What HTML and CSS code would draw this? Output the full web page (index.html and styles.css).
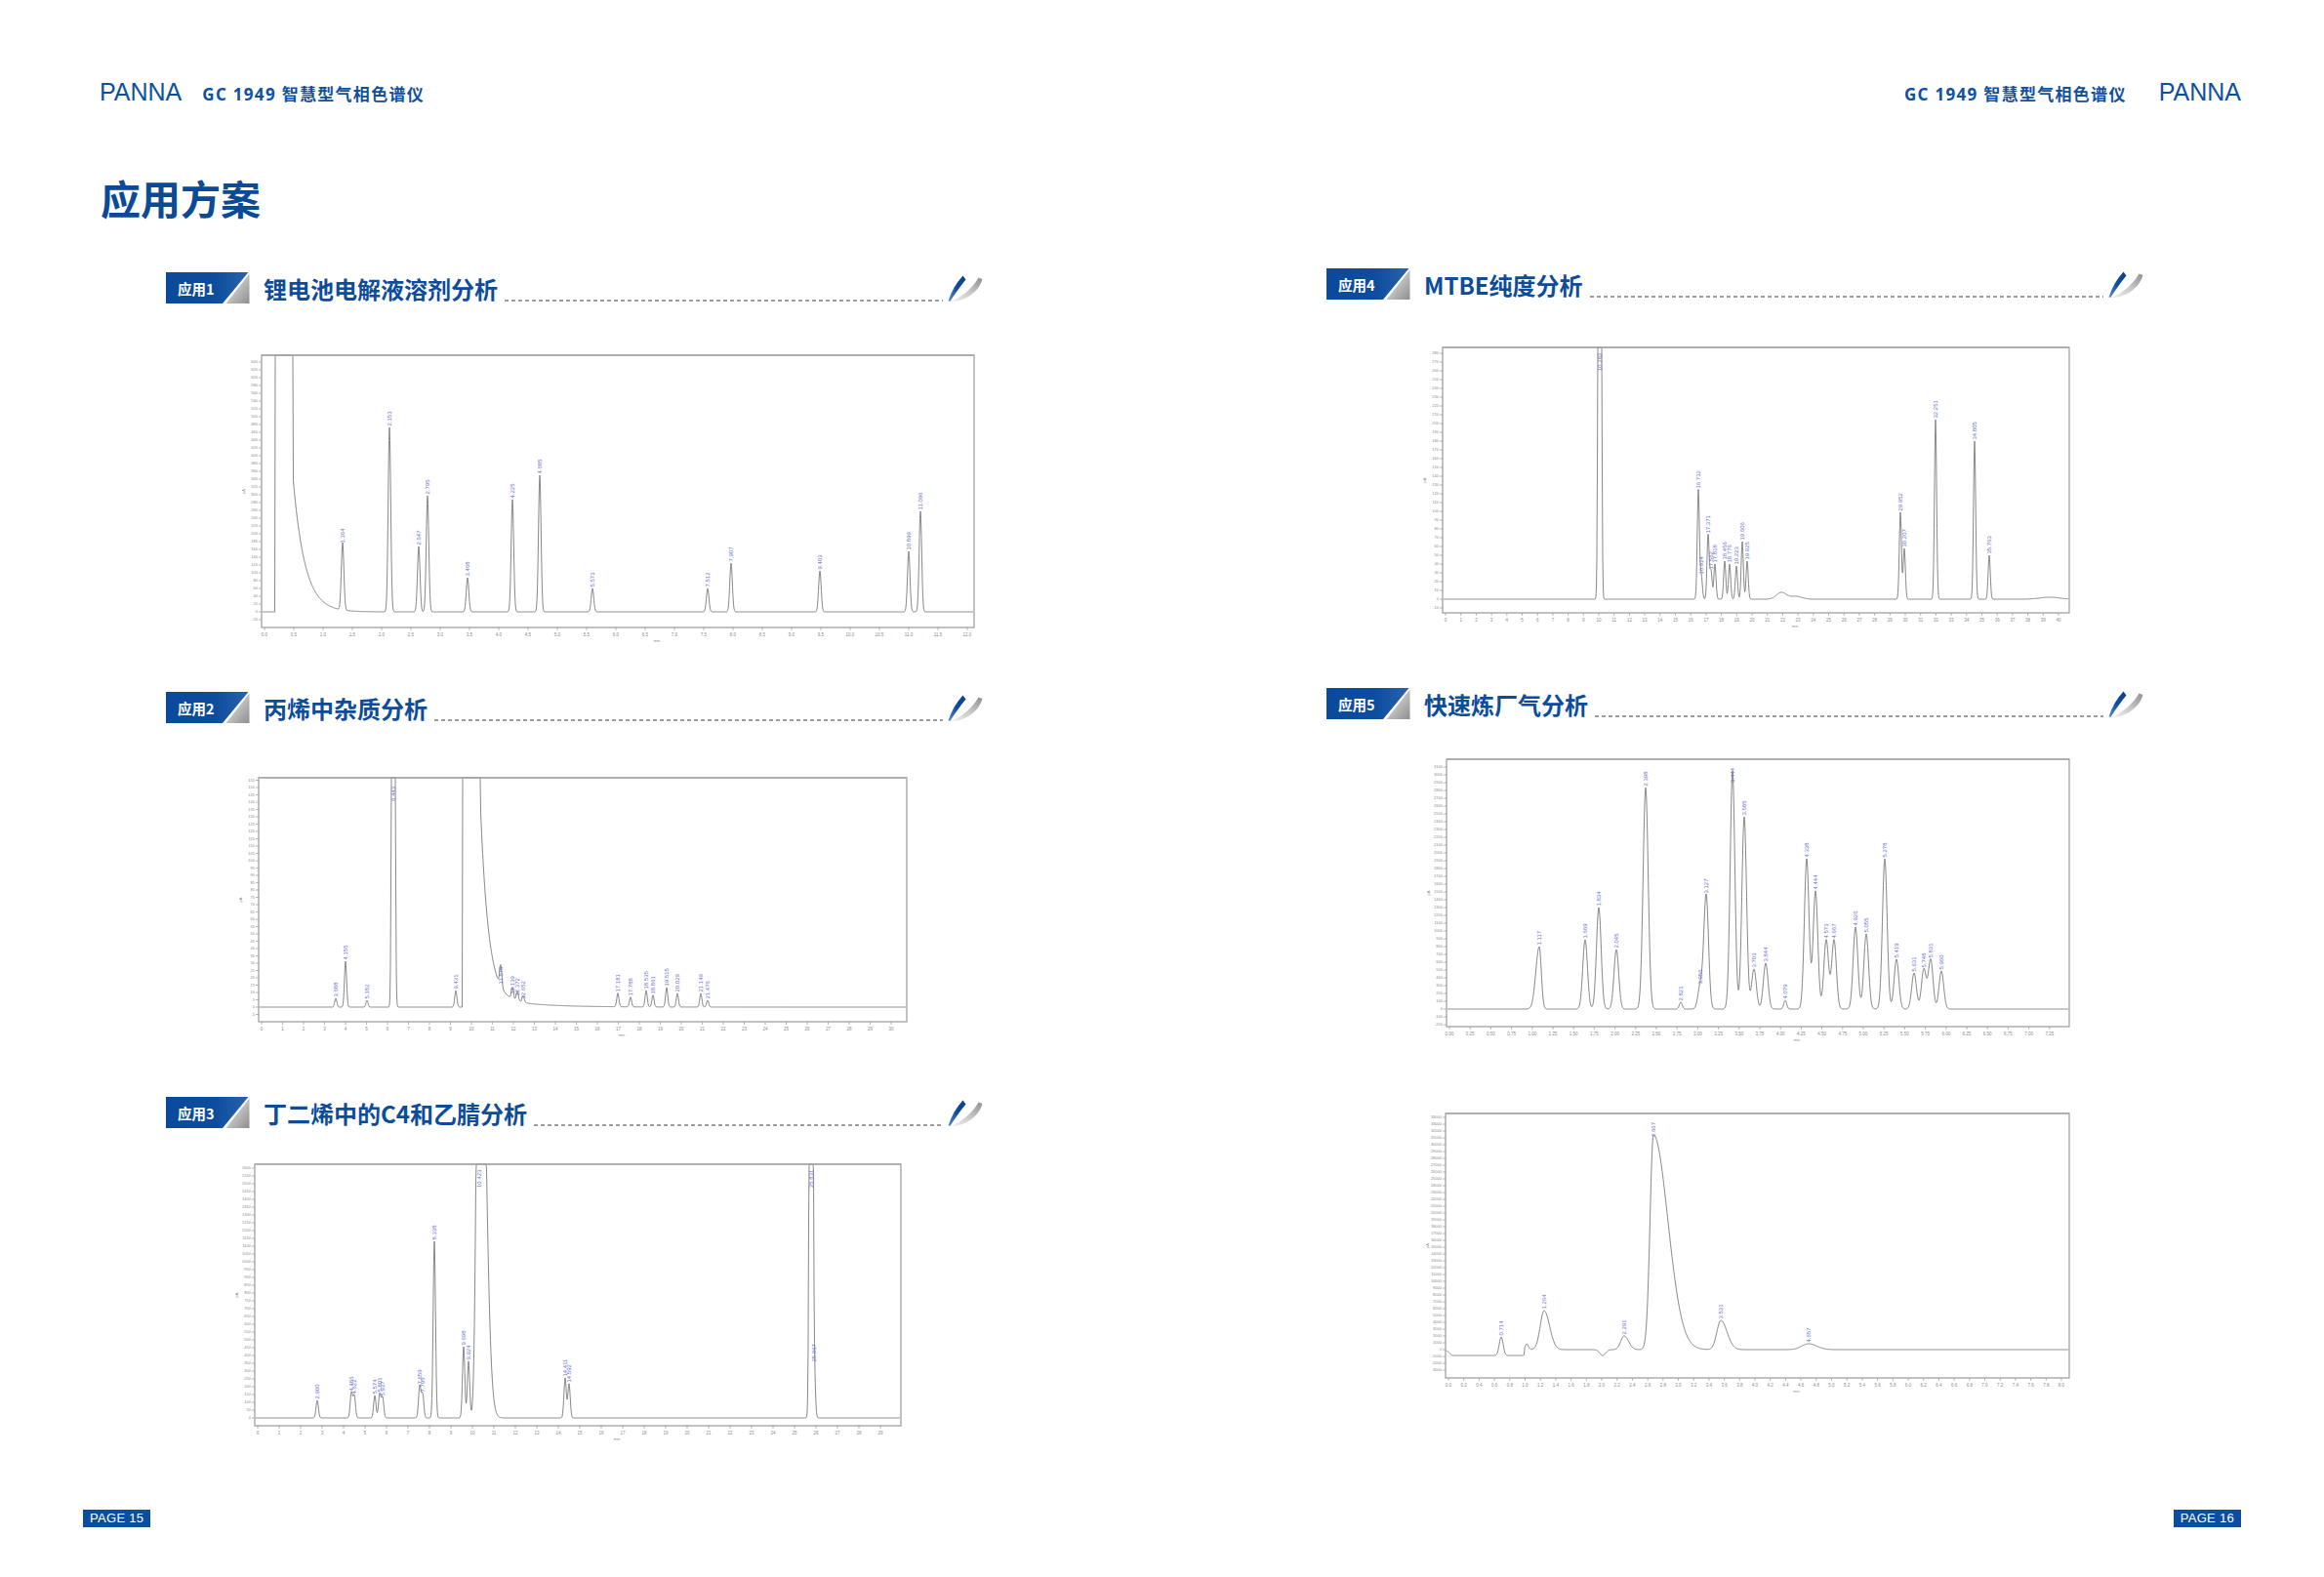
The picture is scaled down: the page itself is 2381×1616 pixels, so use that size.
FILE: index.html
```html
<!DOCTYPE html>
<html lang="zh-CN">
<head>
<meta charset="utf-8">
<title>应用方案</title>
<link rel="stylesheet" href="styles.css">
</head>
<body>
<svg class="defs" width="0" height="0" aria-hidden="true">
  <defs>
    <linearGradient id="badgeGray" x1="0" y1="0" x2="1" y2="1">
      <stop offset="0" stop-color="#f4f4f4"/>
      <stop offset="0.45" stop-color="#c4c4c4"/>
      <stop offset="1" stop-color="#8e8e8e"/>
    </linearGradient>
    <linearGradient id="badgeBlue" x1="0" y1="0" x2="1" y2="0">
      <stop offset="0" stop-color="#0b4a9a"/>
      <stop offset="0.6" stop-color="#0d4d9e"/>
      <stop offset="1" stop-color="#2a64ad"/>
    </linearGradient>
    <linearGradient id="swooshGray" x1="0" y1="1" x2="1" y2="0">
      <stop offset="0" stop-color="#f2f2f2"/>
      <stop offset="0.5" stop-color="#c8c8c8"/>
      <stop offset="1" stop-color="#8f8f8f"/>
    </linearGradient>
    <linearGradient id="swooshBlue" x1="0" y1="1" x2="1" y2="0">
      <stop offset="0" stop-color="#5f8fd0"/>
      <stop offset="0.5" stop-color="#0e4d9e"/>
      <stop offset="1" stop-color="#0a3f86"/>
    </linearGradient>
  </defs>
</svg>
<div class="spread">
  <section class="page page-left">
    <header class="running-head">
      <span class="brand">PANNA</span>
      <span class="model">GC 1949 智慧型气相色谱仪</span>
    </header>
    <h1 class="page-title">应用方案</h1>

    <div class="app-head head-1">
      <svg class="badge" viewBox="0 0 86 32"><path class="badge-blue" d="M0 0H84.5L58 32H0Z"/><path class="badge-gray" d="M85.5 1.5V32H61.5Z"/><text x="12" y="22.5" class="badge-text">应用1</text></svg>
      <h2 class="app-title">锂电池电解液溶剂分析</h2>
      <span class="rule"></span>
      <svg class="swoosh" viewBox="0 0 37 28"><path fill="url(#swooshBlue)" d="M1.5 27.5C4.5 18 9.5 9 16.5 1.5L19.5 5.5C13.5 13 8 20.5 3.5 27.8Z"/><path fill="url(#swooshGray)" d="M4 28C15 23.5 26 15 32.5 3.5L36.5 5C34 14.5 26 22.5 14 26.8C10 27.8 6.5 28.2 4 28Z"/></svg>
    </div>
    <div class="chart chart-1" data-chart="c1"></div>

    <div class="app-head head-2">
      <svg class="badge" viewBox="0 0 86 32"><path class="badge-blue" d="M0 0H84.5L58 32H0Z"/><path class="badge-gray" d="M85.5 1.5V32H61.5Z"/><text x="12" y="22.5" class="badge-text">应用2</text></svg>
      <h2 class="app-title">丙烯中杂质分析</h2>
      <span class="rule"></span>
      <svg class="swoosh" viewBox="0 0 37 28"><path fill="url(#swooshBlue)" d="M1.5 27.5C4.5 18 9.5 9 16.5 1.5L19.5 5.5C13.5 13 8 20.5 3.5 27.8Z"/><path fill="url(#swooshGray)" d="M4 28C15 23.5 26 15 32.5 3.5L36.5 5C34 14.5 26 22.5 14 26.8C10 27.8 6.5 28.2 4 28Z"/></svg>
    </div>
    <div class="chart chart-2" data-chart="c2"></div>

    <div class="app-head head-3">
      <svg class="badge" viewBox="0 0 86 32"><path class="badge-blue" d="M0 0H84.5L58 32H0Z"/><path class="badge-gray" d="M85.5 1.5V32H61.5Z"/><text x="12" y="22.5" class="badge-text">应用3</text></svg>
      <h2 class="app-title">丁二烯中的C4和乙腈分析</h2>
      <span class="rule"></span>
      <svg class="swoosh" viewBox="0 0 37 28"><path fill="url(#swooshBlue)" d="M1.5 27.5C4.5 18 9.5 9 16.5 1.5L19.5 5.5C13.5 13 8 20.5 3.5 27.8Z"/><path fill="url(#swooshGray)" d="M4 28C15 23.5 26 15 32.5 3.5L36.5 5C34 14.5 26 22.5 14 26.8C10 27.8 6.5 28.2 4 28Z"/></svg>
    </div>
    <div class="chart chart-3" data-chart="c3"></div>

    <footer class="page-no">PAGE 15</footer>
  </section>

  <section class="page page-right">
    <header class="running-head">
      <span class="model">GC 1949 智慧型气相色谱仪</span>
      <span class="brand">PANNA</span>
    </header>

    <div class="app-head head-4">
      <svg class="badge" viewBox="0 0 86 32"><path class="badge-blue" d="M0 0H84.5L58 32H0Z"/><path class="badge-gray" d="M85.5 1.5V32H61.5Z"/><text x="12" y="22.5" class="badge-text">应用4</text></svg>
      <h2 class="app-title">MTBE纯度分析</h2>
      <span class="rule"></span>
      <svg class="swoosh" viewBox="0 0 37 28"><path fill="url(#swooshBlue)" d="M1.5 27.5C4.5 18 9.5 9 16.5 1.5L19.5 5.5C13.5 13 8 20.5 3.5 27.8Z"/><path fill="url(#swooshGray)" d="M4 28C15 23.5 26 15 32.5 3.5L36.5 5C34 14.5 26 22.5 14 26.8C10 27.8 6.5 28.2 4 28Z"/></svg>
    </div>
    <div class="chart chart-4" data-chart="c4"></div>

    <div class="app-head head-5">
      <svg class="badge" viewBox="0 0 86 32"><path class="badge-blue" d="M0 0H84.5L58 32H0Z"/><path class="badge-gray" d="M85.5 1.5V32H61.5Z"/><text x="12" y="22.5" class="badge-text">应用5</text></svg>
      <h2 class="app-title">快速炼厂气分析</h2>
      <span class="rule"></span>
      <svg class="swoosh" viewBox="0 0 37 28"><path fill="url(#swooshBlue)" d="M1.5 27.5C4.5 18 9.5 9 16.5 1.5L19.5 5.5C13.5 13 8 20.5 3.5 27.8Z"/><path fill="url(#swooshGray)" d="M4 28C15 23.5 26 15 32.5 3.5L36.5 5C34 14.5 26 22.5 14 26.8C10 27.8 6.5 28.2 4 28Z"/></svg>
    </div>
    <div class="chart chart-5" data-chart="c5"></div>
    <div class="chart chart-6" data-chart="c6"></div>

    <footer class="page-no">PAGE 16</footer>
  </section>
</div>
<script src="script.js"></script>
</body>
</html>
```

FILE: styles.css
```css
* { box-sizing: border-box; margin: 0; padding: 0; }
html, body { width: 2381px; height: 1616px; background: #fff; overflow: hidden; }
body { font-family: "Liberation Sans", "Noto Sans CJK SC", sans-serif; color: #0d4e9f; }

.defs { display: block; width: 0; height: 0; overflow: hidden; }

.spread { display: flex; width: 2381px; height: 1616px; }
.page { width: 1190.5px; height: 1616px; display: flex; flex-direction: column; padding-bottom: 51px; flex: none; }

/* running head */
.running-head { display: flex; align-items: baseline; margin-top: 79px; height: 30px; line-height: 30px; }
.page-left .running-head { padding-left: 102px; }
.page-right .running-head { justify-content: flex-end; padding-right: 85px; }
.brand { font-family: "Liberation Sans", sans-serif; font-size: 25px; color: #0d4fa1; }
.model { font-family: "Noto Sans", "Noto Sans CJK SC", sans-serif; font-weight: 700; font-size: 17px; letter-spacing: 1.3px; color: #1050a0; }
.page-left .model { margin-left: 21px; }
.page-right .model { margin-right: 33px; }

.page-title { font-family: "Noto Sans CJK SC", sans-serif; font-weight: 700; font-size: 41px; line-height: 48px; margin: 69px 0 0 103px; color: #0b4a97; }

/* section heads */
.app-head { display: flex; align-items: flex-end; width: 837px; height: 32px; margin-left: 170px; flex: none; }
.page-right .app-head { margin-left: 168.5px; }
.head-1 { margin-top: 53px; }
.head-2 { margin-top: 46px; }
.head-3 { margin-top: 57px; }
.head-4 { margin-top: 166px; }
.head-5 { margin-top: 57px; }

.badge { width: 86px; height: 32px; flex: none; display: block; }
.badge-blue { fill: url(#badgeBlue); }
.badge-gray { fill: url(#badgeGray); }
.badge-text { font-family: "Noto Sans CJK SC", sans-serif; font-weight: 700; font-size: 14.5px; fill: #fff; }

.app-title { font-family: "Noto Sans CJK SC", sans-serif; font-weight: 700; font-size: 24px; line-height: 28px; color: #0c4c9b; margin: 0 0 1px 14px; white-space: nowrap; }
.rule { flex: 1; height: 1.5px; margin: 0 4px 2.5px 7px; background: repeating-linear-gradient(to right, #9c9c9c 0 4px, transparent 4px 7px); }
.swoosh { width: 37px; height: 28px; flex: none; display: block; margin-bottom: 2px; }

/* charts */
.chart { flex: none; }
.chart svg { display: block; }
.chart-1 { margin: 51px 0 0 248px; }
.chart-2 { margin: 54px 0 0 245px; }
.chart-3 { margin: 35px 0 0 241px; }
.chart-4 { margin: 47px 0 0 267.5px; }
.chart-5 { margin: 39px 0 0 271.5px; }
.chart-6 { margin: 67px 0 0 270.5px; }

.cg-frame { fill: #fff; stroke: #a8a8a8; stroke-width: 1.4; }
.cg-ticks { stroke: #9a9a9a; stroke-width: 0.7; fill: none; }
.cg-trace { stroke: #7a7a7a; stroke-width: 0.9; fill: none; stroke-linejoin: round; }
.cg-ylab { font-family: "Liberation Sans", sans-serif; font-size: 4px; fill: #8c8c8c; text-anchor: end; }
.cg-xlab { font-family: "Liberation Sans", sans-serif; font-size: 4.5px; fill: #8c8c8c; text-anchor: middle; }
.cg-axis { font-family: "Liberation Sans", sans-serif; font-size: 4px; fill: #8c8c8c; text-anchor: middle; }
.cg-pk { font-family: "Liberation Sans", sans-serif; font-size: 6px; fill: #6a72cc; }

/* footer */
.page-no { margin-top: auto; height: 18px; line-height: 18px; padding: 0 7px; font-family: "Liberation Sans", sans-serif; font-size: 13px; letter-spacing: 0.3px; color: #fff; background: #0d4d9e; flex: none; }
.page-left .page-no { align-self: flex-start; margin-left: 85px; }
.page-right .page-no { align-self: flex-end; margin-right: 85px; }
```

FILE: script.js
```js
(function () {
  var OFF = null;
  var CH = {
    c1: { L: 268, T: 364, R: 998, B: 643, base: 627, s: 1.3, yStep: 8, yl: 20, xStep: 30, xl: 0.5, xd: 1, xr: 12,
      blocks: [[282, 300]], decays: [[300, 140, 12]],
      peaks: [[351, 558], [399, 438], [429, 560], [438, 508], [479, 592], [525, 512], [553, 487], [607, 603], [725, 603], [749, 577], [840, 585], [931, 565], [943, 524]] },
    c2: { L: 265, T: 797, R: 929, B: 1047, base: 1032, s: 1.1, yStep: 7.5, yl: 5, xStep: 21.5, xl: 1, xd: 0, xr: 31,
      blocks: [[474, 492]], decays: [[492, 200, 8], [492, 12, 40]],
      peaks: [[344, 1023], [354, 985], [376, 1025], [403, OFF], [467, 1015], [513, 1010], [525, 1020], [530, 1022], [536, 1025], [633, 1018], [646, 1022], [662, 1015], [669, 1020], [683, 1012], [694, 1018], [718, 1018], [725, 1025]] },
    c3: { L: 261, T: 1193, R: 923, B: 1461, base: 1453, s: 1.2, yStep: 8, yl: 50, xStep: 22, xl: 1, xd: 0, xr: 30,
      peaks: [[325, 1435], [360, 1427], [363, 1430], [384, 1430], [389, 1428], [392, 1432], [430, 1420], [433, 1428], [445, 1272], [475, 1380], [480, 1395], [491, 853, 2.6, 2.2], [579, 1412], [583, 1418], [831, OFF], [834, 1397]] },
    c4: { L: 1478, T: 356, R: 2120, B: 628, base: 614, s: 1.1, yStep: 9, yl: 10, xStep: 15.7, xl: 1, xd: 0, xr: 41,
      peaks: [[1639, OFF], [1740, 502], [1743, 590], [1750, 548], [1753, 585], [1757, 578], [1767, 575], [1772, 578], [1779, 580], [1785, 555], [1790, 575], [1825, 607, 5, 1, false], [1840, 611, 6, 1, false], [1947, 525], [1951, 562], [1983, 430], [2023, 452], [2038, 569], [2100, 612, 10, 1, false]] },
    c5: { L: 1482, T: 778, R: 2120, B: 1052, base: 1034, s: 2.4, yStep: 8, yl: 100, xStep: 21.2, xl: 0.25, xd: 2, xr: 7.5,
      peaks: [[1577, 970, 3.5, 0.6], [1624, 963], [1638, 930], [1656, 973], [1686, 807, 2.6], [1722, 1027, 1.5], [1742, 1010], [1748, 917], [1775, 790], [1787, 837], [1797, 993], [1809, 987], [1829, 1025, 1.5], [1851, 880], [1860, 913], [1871, 963], [1879, 963], [1901, 950], [1912, 957], [1931, 880], [1943, 983], [1961, 997], [1971, 993], [1978, 983], [1989, 995]] },
    c6: { L: 1481, T: 1141, R: 2120, B: 1412, base: 1383, s: 2.5, yStep: 7, yl: 1000, xStep: 15.7, xl: 0.2, xd: 1, xr: 8,
      baseFn: function (x) { if (x < 1488) return 1383 + 6 * Math.max(0, x - 1481) / 7; if (x < 1562) return 1389; return 1383; },
      peaks: [[1538, 1370, 2], [1564, 1377, 1.2, 1.5, false], [1582, 1343, 4, 1.4], [1642, 1389, 3, 1, false], [1664, 1369, 3.5, 1.3], [1694, 1163, 3.5, 4.2], [1763, 1353, 4, 1.6], [1853, 1377, 7, 1.2]] }
  };

  function fmt(v) { return Math.round(v * 100) / 100; }

  function render(el, c) {
    var ox = 20, oy = 2;
    var fw = c.R - c.L, fh = c.B - c.T;
    var W = fw + ox + 4, H = fh + oy + 20;
    var X = function (x) { return fmt(x - c.L + ox); };
    var Y = function (y) { return fmt(y - c.T + oy); };
    var baseAt = c.baseFn || function () { return c.base; };
    var s = '<svg class="chromatogram" width="' + W + '" height="' + H + '" viewBox="0 0 ' + W + ' ' + H + '">';
    s += '<rect class="cg-frame" x="' + ox + '" y="' + oy + '" width="' + fw + '" height="' + fh + '"/>';

    var ticks = '', labs = '';
    var i, y, x;
    for (y = c.base, i = 0; y > c.T + 2; y -= c.yStep, i++) {
      ticks += 'M' + (ox - 3) + ' ' + Y(y) + 'H' + ox;
      labs += '<text class="cg-ylab" x="' + (ox - 4) + '" y="' + fmt(Y(y) + 1.4) + '">' + (i * c.yl) + '</text>';
    }
    for (y = c.base + c.yStep, i = 1; y < c.B - 1; y += c.yStep, i++) {
      ticks += 'M' + (ox - 3) + ' ' + Y(y) + 'H' + ox;
      labs += '<text class="cg-ylab" x="' + (ox - 4) + '" y="' + fmt(Y(y) + 1.4) + '">-' + (i * c.yl) + '</text>';
    }
    for (x = c.L + 3, i = 0; x < c.R; x += c.xStep, i++) {
      ticks += 'M' + X(x) + ' ' + (oy + fh) + 'v3';
      labs += '<text class="cg-xlab" x="' + X(x) + '" y="' + (oy + fh + 9) + '">' + (i * c.xl).toFixed(c.xd) + '</text>';
    }
    labs += '<text class="cg-axis" transform="translate(3,' + fmt(oy + fh / 2) + ') rotate(-90)">pA</text>';
    labs += '<text class="cg-axis" x="' + fmt(ox + fw / 2 + 40) + '" y="' + (oy + fh + 15) + '">min</text>';
    s += '<path class="cg-ticks" d="' + ticks + '"/>' + labs;

    // trace
    var pts = [];
    for (x = c.L + 1; x <= c.R - 1; x += 0.5) {
      var b = baseAt(x), v = 0, k;
      for (k = 0; k < c.peaks.length; k++) {
        var p = c.peaks[k];
        var top = p[1] === OFF ? c.T - 1500 : p[1];
        var sg = p[2] || c.s, tail = p[3] || 1;
        var h = baseAt(p[0]) - top;
        var d = x - p[0];
        var sig = d < 0 ? sg : sg * tail;
        if (Math.abs(d) < sig * 7) v += h * Math.exp(-d * d / (2 * sig * sig));
      }
      if (c.decays) for (k = 0; k < c.decays.length; k++) { var dc = c.decays[k]; if (x >= dc[0]) v += dc[1] * Math.exp(-(x - dc[0]) / dc[2]); }
      if (c.blocks) for (k = 0; k < c.blocks.length; k++) { if (x >= c.blocks[k][0] && x <= c.blocks[k][1]) v += 10000; }
      y = b - v;
      if (y < c.T) y = c.T;
      if (y > c.B - 1) y = c.B - 1;
      pts.push(X(x) + ',' + Y(y));
    }
    s += '<polyline class="cg-trace" points="' + pts.join(' ') + '"/>';
    s += '<path class="cg-frame-top" d="M' + ox + ' ' + oy + 'H' + (ox + fw) + '" stroke="#a8a8a8" stroke-width="1.4"/>';

    // peak labels
    for (var j = 0; j < c.peaks.length; j++) {
      var pk = c.peaks[j];
      if (pk[4] === false) continue;
      var tp = pk[1] === OFF ? c.T : pk[1];
      var ly = Math.max(Y(tp) - 1.5, oy + 24);
      var rt = ((pk[0] - c.L) / fw * c.xr).toFixed(3);
      s += '<text class="cg-pk" transform="translate(' + fmt(X(pk[0]) + 2) + ',' + fmt(ly) + ') rotate(-90)">' + rt + '</text>';
    }
    s += '</svg>';
    el.innerHTML = s;
  }

  var els = document.querySelectorAll('[data-chart]');
  for (var n = 0; n < els.length; n++) {
    var cfg = CH[els[n].getAttribute('data-chart')];
    if (cfg) render(els[n], cfg);
  }
})();
```
